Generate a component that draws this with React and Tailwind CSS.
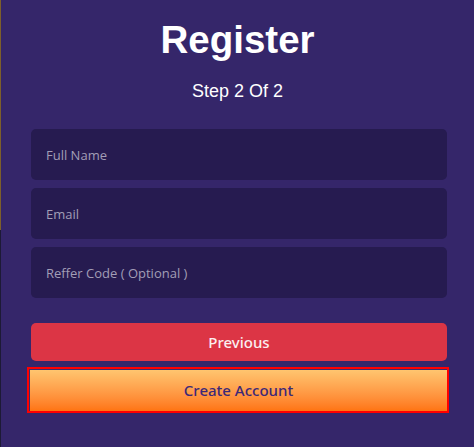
export default function App() {
  const fields = ['Full Name', 'Email', 'Reffer Code ( Optional )'];

  return (
    <div className="flex h-[447px] w-[474px] overflow-hidden bg-[#35266a]">
      <div className="flex w-px flex-col">
        <div className="h-[230px] bg-[#7d5f2a]" />
        <div className="flex-1 bg-[#1d1a36]" />
      </div>

      <div className="flex flex-1 flex-col">
        <h1
          className="mt-[18px] text-center text-[38.5px] font-bold leading-[44px] text-white"
          style={{ fontFamily: '"Liberation Sans", Arial, sans-serif' }}
        >
          Register
        </h1>
        <p
          className="mt-[18px] text-center text-[18px] leading-[22px] text-white"
          style={{ fontFamily: '"Liberation Sans", Arial, sans-serif' }}
        >
          Step 2 Of 2
        </p>

        <div
          className="mt-[27px] flex flex-col gap-2 pl-[30px] pr-[27px]"
          style={{ fontFamily: '"Open Sans", "Noto Sans", sans-serif' }}
        >
          {fields.map((f) => (
            <input
              key={f}
              placeholder={f}
              className="h-[51px] w-full rounded-[5px] bg-[#261b50] px-[15px] text-[13px] text-white outline-none placeholder:text-[#a29eb6]"
            />
          ))}
        </div>

        <div
          className="mt-[25px] flex flex-col pl-[26px] pr-[25px]"
          style={{ fontFamily: '"Noto Sans", "Open Sans", sans-serif' }}
        >
          <button className="ml-[4px] mr-[2px] h-[38px] rounded-[5px] bg-[#dc3545] text-[15px] font-medium text-[#fbeef0]">
            Previous
          </button>
          <div className="mt-[6px] h-[46px] border-2 border-[#ff0000]">
            <button className="h-full w-full border-l border-t border-[#3b2a6e] bg-gradient-to-b from-[#ffc56f] to-[#ff7410] text-[15px] font-medium text-[#3d2878]">
              Create Account
            </button>
          </div>
        </div>
      </div>
    </div>
  );
}
